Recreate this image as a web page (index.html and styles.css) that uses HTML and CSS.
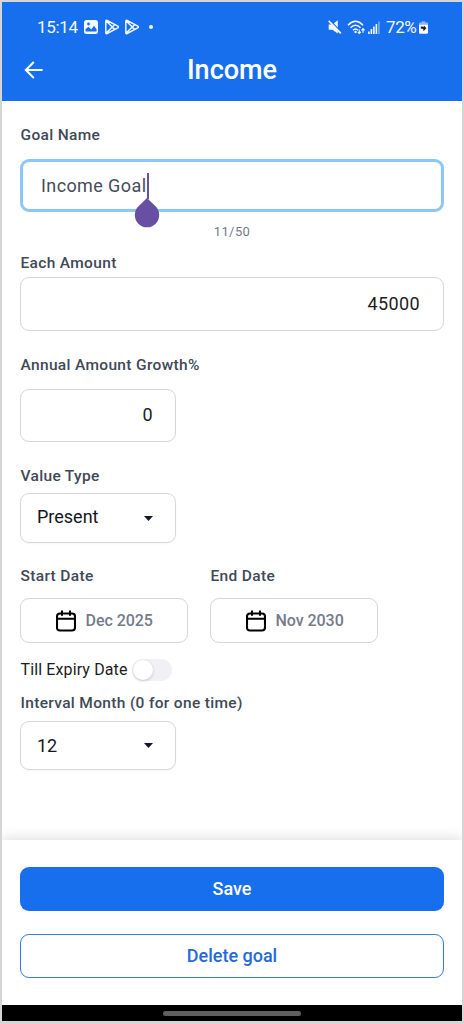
FILE: index.html
```html
<!DOCTYPE html>
<html lang="en">
<head>
<meta charset="utf-8">
<title>Income</title>
<link rel="stylesheet" href="styles.css">
</head>
<body>
<svg class="defs" width="0" height="0" aria-hidden="true">
  <symbol id="play" viewBox="0 0 16 16"><path d="M1.8 2.2Q1.8.8 3.1 1.5L13.8 7.1q1.3.8 0 1.7L3.1 14.5Q1.8 15.2 1.8 13.8ZM2.2 2 10.6 10.3M2.2 14 10.6 5.7" fill="none" stroke="currentColor" stroke-width="1.45" stroke-linejoin="round"/></symbol>
  <symbol id="calendar" viewBox="0 0 20 22"><path d="M4 3.5H16Q19 3.5 19 6.5V17.5Q19 20.5 16 20.5H4Q1 20.5 1 17.5V6.5Q1 3.5 4 3.5ZM1.2 8.8H18.8M6 1.2V5M14 1.2V5" fill="none" stroke="#000" stroke-width="2.1" stroke-linecap="round"/></symbol>
</svg>
<div class="screen">
  <header class="header">
    <div class="status">
      <div class="status-left">
        <span class="clock">15:14</span>
        <svg class="photo" width="14" height="14" viewBox="0 0 14 14"><rect width="14" height="14" rx="2.5" fill="#f4f9ff"/><path d="M1.6 11.5V9L4.5 6.7 7.3 9.4 10 5.8l2.6 3.4v2.3Z" fill="#176fee"/><circle cx="4.5" cy="4" r="1.4" fill="#176fee"/></svg>
        <svg class="play" width="16" height="16"><use href="#play"/></svg>
        <svg class="play" width="16" height="16"><use href="#play"/></svg>
        <span class="dot"></span>
      </div>
      <div class="status-right">
        <svg width="14" height="14" viewBox="0 0 14 14"><path d="M.7 4.6H4.4L9.8.2V13.6L4.4 9.7H.7Z" fill="#f4f9ff"/><path d="M1.8.2 13.6 12.3" stroke="#176fee" stroke-width="1.3"/><path d="M.7.9 12.8 13.3" stroke="#f4f9ff" stroke-width="1.8"/></svg>
        <svg class="wifi" width="19" height="15" viewBox="0 0 19 15"><path d="M1 5.2Q8.5-2.6 16 5.2M3.5 7.8Q8.5 2.6 13.5 7.8M6 10.3Q8.5 7.7 11 10.3" fill="none" stroke="#f4f9ff" stroke-width="1.4"/><circle cx="8.5" cy="12" r="1.2" fill="#f4f9ff"/><path d="M12.3 9.5V13M10.8 11.8l1.5 1.7 1.5-1.7M16 12.7V8.8M14.5 10.3l1.5-1.7 1.5 1.7" fill="none" stroke="#f4f9ff" stroke-width="1.1"/></svg>
        <svg class="signal" width="12" height="13" viewBox="0 0 12 13"><path d="M.9 10.5V13M3.4 8V13M5.9 5.4V13M8.4 3V13" stroke="#f4f9ff" stroke-width="1.6"/><path d="M10.9.5V13" stroke="#75aaf6" stroke-width="1.6"/></svg>
        <span class="percent">72%</span>
        <svg class="battery" width="9" height="13" viewBox="0 0 10 14"><path d="M3 0H7V1.5H9Q10 1.5 10 2.5V5H0V2.5Q0 1.5 1 1.5H3Z" fill="#8ab7f7"/><path d="M0 4H10V12.5Q10 14 8.5 14H1.5Q0 14 0 12.5Z" fill="#f4f9ff"/><path d="M2 6 5.4 6.1 5.8 5.1 8.2 7.7 5 11.3 4.7 8.7 2 8.2Z" fill="#222"/></svg>
      </div>
    </div>
    <div class="titlebar">
      <svg width="19" height="18" viewBox="0 0 19 18"><path d="M18.6 9H1.8M9.8 1 1.8 9l8 8" fill="none" stroke="#fff" stroke-width="2"/></svg>
      <h1>Income</h1>
    </div>
  </header>
  <main class="form">
    <label class="label name-label">Goal Name</label>
    <div class="input focused"><span class="typed">Income Goal</span><span class="caret"><svg class="handle" width="26" height="30" viewBox="0 0 26 30"><path d="M13 0 21.5 8.3A12.2 12.2 0 1 1 4.5 8.3Z" fill="#6750a4"/></svg></span></div>
    <div class="counter">11/50</div>
    <label class="label amount-label">Each Amount</label>
    <div class="input amount">45000</div>
    <label class="label growth-label">Annual Amount Growth%</label>
    <div class="input growth">0</div>
    <label class="label type-label">Value Type</label>
    <div class="select"><span class="present">Present</span><svg width="9" height="5" viewBox="0 0 9 5"><path d="M0 0H9L4.5 5Z" fill="#111827"/></svg></div>
    <div class="dates">
      <div class="date-field"><label class="label start-label">Start Date</label><div class="date"><svg width="20" height="22"><use href="#calendar"/></svg><span>Dec 2025</span></div></div>
      <div class="date-field"><label class="label end-label">End Date</label><div class="date"><svg width="20" height="22"><use href="#calendar"/></svg><span>Nov 2030</span></div></div>
    </div>
    <div class="expiry"><span class="expiry-text">Till Expiry Date</span><span class="toggle"><span class="knob"></span></span></div>
    <label class="label interval-label">Interval Month (0 for one time)</label>
    <div class="select interval"><span>12</span><svg width="9" height="5" viewBox="0 0 9 5"><path d="M0 0H9L4.5 5Z" fill="#111827"/></svg></div>
  </main>
  <footer class="actions">
    <div class="button save">Save</div>
    <div class="button delete">Delete goal</div>
  </footer>
  <div class="navbar"><span class="pill"></span></div>
</div>
</body>
</html>
```
FILE: styles.css
```css
* { box-sizing: border-box; }
body { margin: 0; background: #d5d5d5; font-family: Roboto, "Liberation Sans", sans-serif; color: #1b1d22; }
svg { display: block; flex: none; }
.defs { position: absolute; }
.screen { height: 1024px; border: solid #d5d5d5; border-width: 2px 2px 3px 2px; background: #fff; display: flex; flex-direction: column; overflow: hidden; }
.header { height: 99px; flex: none; background: #176fee; color: #f4f9ff; }
.status { height: 42px; padding: 8px 34px 0 35px; display: flex; justify-content: space-between; align-items: center; }
.status-left, .status-right { display: flex; align-items: center; height: 20px; }
.clock { width: 41px; font-size: 17px; letter-spacing: -.3px; line-height: 20px; }
.photo { margin-left: 6px; }
.play { margin-left: 6px; }
.play + .play { margin-left: 4px; }
.dot { width: 4px; height: 4px; border-radius: 50%; background: #f4f9ff; margin-left: 9px; }
.wifi { margin-left: 5px; }
.signal { margin-left: 2px; }
.percent { width: 31px; margin-left: 6px; font-size: 17px; letter-spacing: -.4px; line-height: 20px; }
.battery { margin-left: 2px; }
.titlebar { height: 52px; display: grid; grid-template-columns: 19px 1fr 19px; align-items: center; padding: 0 22px; }
.titlebar h1 { margin: 0; text-align: center; font-size: 27px; line-height: 32px; font-weight: 500; color: #fff; }
.form { height: 739px; flex: none; padding: 24px 18px 0; display: flex; flex-direction: column; }
.label { display: block; white-space: nowrap; font-size: 15.5px; line-height: 20px; height: 20px; padding-left: .5px; font-weight: 500; color: #414957; letter-spacing: .33px; }
.input { flex: none; height: 53px; border: 1px solid #d5d6d9; border-radius: 9px; display: flex; align-items: center; justify-content: flex-end; padding: 0 23px 2px; font-size: 18px; letter-spacing: .4px; }
.focused { margin-top: 14px; border: 3px solid #89c8f8; justify-content: flex-start; padding: 0 18px; color: #464c58; }
.caret { position: relative; width: 2px; height: 26px; margin-left: 1px; background: #6750a4; }
.handle { position: absolute; left: -13px; top: 25px; }
.counter { height: 16px; margin-top: 12px; text-align: center; font-size: 13px; line-height: 16px; color: #737b89; letter-spacing: .4px; }
.amount-label { margin-top: 13px; }
.amount { margin-top: 4px; height: 54px; }
.growth-label { margin-top: 24px; }
.growth { width: 156px; margin-top: 14px; padding-right: 22px; }
.type-label { margin-top: 24px; }
.select { flex: none; width: 156px; height: 50px; margin-top: 7px; border: 1px solid #d5d7dd; border-radius: 9px; box-shadow: 0 1px 2px #0000000a; display: flex; align-items: center; justify-content: space-between; padding: 0 22px 0 16px; font-size: 18px; color: #14171d; }
.present { padding-bottom: 4px; }
.dates { display: flex; gap: 22px; margin-top: 23px; }
.date-field { width: 168px; }
.date { height: 45px; margin-top: 12px; border: 1px solid #d5d6d9; border-radius: 9px; display: flex; align-items: center; gap: 10px; padding-left: 34.5px; font-size: 16px; letter-spacing: -.05px; font-weight: 500; color: #747b8a; white-space: nowrap; }
.expiry { height: 24px; margin-top: 15px; display: flex; align-items: center; font-size: 16px; }
.expiry-text { width: 112px; padding-left: .5px; white-space: nowrap; letter-spacing: .12px; padding-bottom: 1px; }
.toggle { width: 40px; height: 22px; border-radius: 11px; background: #f1f1f5; padding: 1px; }
.knob { display: block; width: 20px; height: 20px; border-radius: 50%; background: #fff; box-shadow: 0 1px 3px #00000030; }
.interval-label { margin-top: 11px; }
.interval { height: 49px; margin-top: 8px; padding-bottom: 1px; }
.actions { height: 165px; flex: none; background: #fff; box-shadow: 0 -1px 13px #00000026; padding: 27px 18px 0; display: flex; flex-direction: column; gap: 23px; }
.button { height: 44px; padding-bottom: 1px; border-radius: 9px; display: flex; align-items: center; justify-content: center; font-size: 18px; font-weight: 500; }
.save { color: #fff; background: #176fee; }
.delete { color: #2469dc; border: 1px solid #357ae0; }
.navbar { height: 17px; flex: none; background: #000; display: flex; align-items: center; justify-content: center; }
.pill { width: 138px; height: 5px; border-radius: 3px; background: #606060; }
```
